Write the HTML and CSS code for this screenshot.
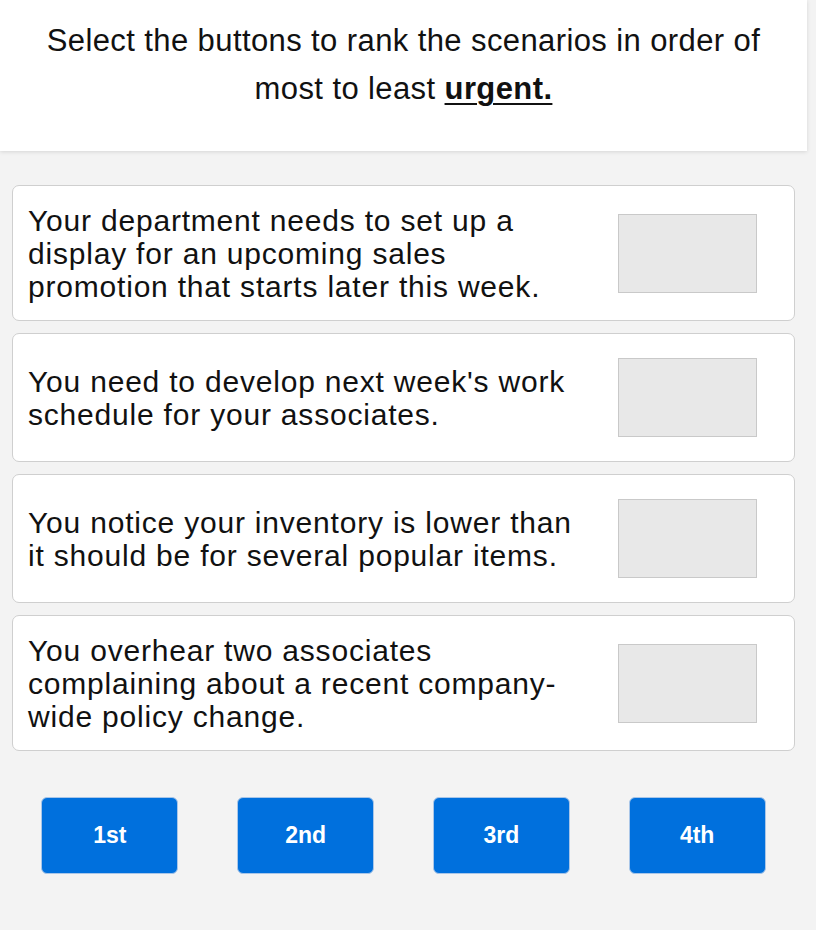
FILE: index.html
```html
<!DOCTYPE html>
<html>
<head>
<meta charset="utf-8">
<link rel="stylesheet" href="styles.css">
</head>
<body>
<div class="header">
  <p class="prompt">Select the buttons to rank the scenarios in order of<br>most to least <b class="u">urgent.</b></p>
</div>
<div class="list">
  <div class="card card-3">
    <div class="text">Your department needs to set up a display for an upcoming sales promotion that starts later this week.</div>
    <div class="slot"></div>
  </div>
  <div class="card">
    <div class="text">You need to develop next week's work schedule for your associates.</div>
    <div class="slot"></div>
  </div>
  <div class="card">
    <div class="text">You notice your inventory is lower than it should be for several popular items.</div>
    <div class="slot"></div>
  </div>
  <div class="card card-3">
    <div class="text">You overhear two associates complaining about a recent company-wide policy change.</div>
    <div class="slot"></div>
  </div>
  <div class="buttons">
    <button class="btn">1st</button>
    <button class="btn">2nd</button>
    <button class="btn">3rd</button>
    <button class="btn">4th</button>
  </div>
</div>
</body>
</html>
```
FILE: styles.css
```css
html, body {
  margin: 0;
  padding: 0;
}
body {
  background: #f3f3f3;
  font-family: "Liberation Sans", Arial, sans-serif;
  color: #111;
  width: 816px;
  height: 930px;
  overflow: hidden;
}
.header {
  width: 807px;
  height: 151px;
  background: #fff;
  box-shadow: 0 1px 4px rgba(0,0,0,0.12);
  box-sizing: border-box;
  padding: 17px 20px 0;
}
.prompt {
  margin: 0;
  text-align: center;
  font-size: 31px;
  line-height: 48px;
  letter-spacing: 0.4px;
}
.u {
  text-decoration: underline;
  text-decoration-thickness: 2px;
  text-underline-offset: 4px;
}
.list {
  margin: 34px 21px 0 12px;
  display: flex;
  flex-direction: column;
  gap: 12px;
}
.card {
  background: #fff;
  border: 1px solid #cfcfcf;
  border-radius: 7px;
  height: 129px;
  box-sizing: border-box;
  display: flex;
  align-items: center;
  justify-content: space-between;
  padding: 0 37px 0 15px;
}
.card-3 {
  height: 136px;
}
.text {
  font-size: 30px;
  line-height: 33px;
  letter-spacing: 0.8px;
  width: 556px;
  margin-top: 0;
}
.slot {
  width: 139px;
  height: 79px;
  box-sizing: border-box;
  background: #e8e8e8;
  border: 1px solid #c9c9c9;
}
.buttons {
  display: flex;
  justify-content: space-around;
  margin-top: 34px;
}
.btn {
  width: 137px;
  height: 77px;
  background: #0070dd;
  border: 1px solid #a9c6e8;
  border-radius: 6px;
  color: #fff;
  font-family: "Liberation Sans", Arial, sans-serif;
  font-weight: bold;
  font-size: 23px;
  padding: 0;
}
```
